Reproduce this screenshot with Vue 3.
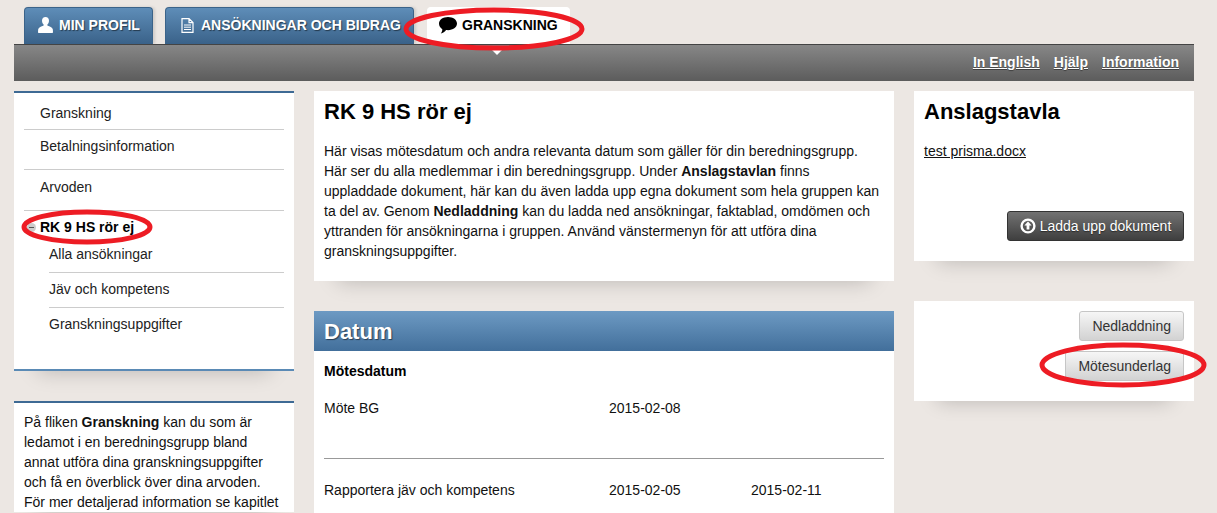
<script setup>
const menu = [
  { label: 'Granskning', cls: 'first' },
  { label: 'Betalningsinformation', cls: 'second' },
  { label: 'Arvoden', cls: 'third' },
]
const subMenu = [
  { label: 'Alla ansökningar', cls: 'sub-first' },
  { label: 'Jäv och kompetens', cls: 'sub-mid' },
  { label: 'Granskningsuppgifter', cls: 'sub-last' },
]
const topLinks = ['In English', 'Hjälp', 'Information']
</script>

<template>
  <div class="page">
    <nav class="tabs">
      <a class="tab profil">
        <svg width="15" height="16" viewBox="0 0 15 16"><path fill="#fff" d="M7.5 0C5.3 0 4 1.7 4 3.8c0 1.5.7 3 1.6 3.8.2.5.1 1-.3 1.2C3.500 9.600.6 10.200.2 12.200L0 15c0 .6.400 1 1 1h13c.6 0 1-.4 1-1l-.2-2.800c-.4-2-3.300-2.600-5.100-3.400-.4-.2-.5-.7-.3-1.200.9-.8 1.600-2.300 1.600-3.800C11 1.700 9.700 0 7.500 0z"/></svg>
        MIN PROFIL
      </a>
      <a class="tab ansokan">
        <svg width="13" height="15" viewBox="0 0 13 15"><path fill="none" stroke="#fff" stroke-width="1.200" d="M1 .6h7l4 4v9.800H1zM8 .6v4h4"/><path stroke="#fff" d="M3 7h7M3 9.200h7M3 11.500h7"/></svg>
        ANSÖKNINGAR OCH BIDRAG
      </a>
      <a class="tab active">
        <svg width="18" height="17" viewBox="0 0 18 17"><path fill="#000" d="M9 0c5 0 9 2.800 9 6.600s-4 6.600-9 6.600c-.7 0-1.300 0-1.900-.1C5.800 14.800 4 16 1.800 16.500c1-1.300 1.500-2.500 1.500-4.300C1.300 11 0 9 0 6.600 0 2.800 4 0 9 0z"/></svg>
        GRANSKNING
      </a>
    </nav>

    <header class="topbar">
      <a v-for="link in topLinks" :key="link">{{ link }}</a>
    </header>

    <main class="columns">
      <aside class="col-side">
        <section class="card menu">
          <a v-for="item in menu" :key="item.label" :class="['menu-item', item.cls]">{{ item.label }}</a>
          <div class="menu-current">
            <span class="minus"></span>
            RK 9 HS rör ej
          </div>
          <a v-for="item in subMenu" :key="item.label" :class="['sub-item', item.cls]">{{ item.label }}</a>
        </section>
        <section class="card help">
          <p>På fliken <b>Granskning</b> kan du som är ledamot i en beredningsgrupp bland annat utföra dina granskningsuppgifter och få en överblick över dina arvoden. För mer detaljerad information se kapitlet</p>
        </section>
      </aside>

      <div class="col-main">
        <section class="card intro">
          <h1>RK 9 HS rör ej</h1>
          <p>Här visas mötesdatum och andra relevanta datum som gäller för din beredningsgrupp. Här ser du alla medlemmar i din beredningsgrupp. Under <b>Anslagstavlan</b> finns uppladdade dokument, här kan du även ladda upp egna dokument som hela gruppen kan ta del av. Genom <b>Nedladdning</b> kan du ladda ned ansökningar, faktablad, omdömen och yttranden för ansökningarna i gruppen. Använd vänstermenyn för att utföra dina granskningsuppgifter.</p>
        </section>
        <section class="card dates">
          <h2>Datum</h2>
          <div class="dates-body">
            <h3>Mötesdatum</h3>
            <div class="date-row meeting">
              <span>Möte BG</span>
              <span>2015-02-08</span>
              <span></span>
            </div>
            <div class="date-row report">
              <span>Rapportera jäv och kompetens</span>
              <span>2015-02-05</span>
              <span>2015-02-11</span>
            </div>
          </div>
        </section>
      </div>

      <aside class="col-right">
        <section class="card board">
          <h1>Anslagstavla</h1>
          <a class="doc-link">test prisma.docx</a>
          <button class="btn dark">
            <svg width="16" height="16" viewBox="0 0 16 16"><circle cx="8" cy="8" r="6.400" fill="none" stroke="#fff" stroke-width="2.400"/><path fill="#fff" d="M8 3.600l3.600 4H9.400v4H6.600v-4H4.400z"/></svg>
            Ladda upp dokument
          </button>
        </section>
        <section class="card actions">
          <button class="btn light">Nedladdning</button>
          <button class="btn light">Mötesunderlag</button>
        </section>
      </aside>
    </main>

    <!-- red marks drawn on top of the screenshot -->
    <svg class="marks" width="1217" height="513" viewBox="0 0 1217 513">
      <g fill="none" stroke="#ed1c24" stroke-width="5">
        <ellipse cx="494" cy="29" rx="88" ry="19" />
        <ellipse cx="87" cy="227" rx="63" ry="15" />
        <ellipse cx="1123" cy="365" rx="81" ry="20" />
      </g>
    </svg>
  </div>
</template>

<style>
html, body {
  margin: 0;
  overflow: hidden;
  background: #ece7e3;
}
</style>

<style scoped>
.page {
  position: relative;
  width: 1217px;
  height: 513px;
  overflow: hidden;
  padding: 7px 23px 0 14px;
  box-sizing: border-box;
  background: #ece7e3;
  font-family: "Liberation Sans", Arial, sans-serif;
  font-size: 14px;
  line-height: 20px;
  color: #111;
}

.tabs {
  display: flex;
  height: 37px;
  margin-left: 10px;
}

.tab {
  display: flex;
  align-items: center;
  gap: 6px;
  height: 37px;
  box-sizing: border-box;
  padding-bottom: 2px;
  border: 1px solid #3b6389;
  border-bottom: 0;
  border-radius: 4px 4px 0 0;
  background: linear-gradient(#5e8db8, #3a6289);
  color: #fff;
  font-weight: bold;
  text-shadow: 1px 1px 1px rgba(0, 0, 0, .5);
  box-shadow: 2px 0 3px rgba(0, 0, 0, .12);
}

.tab svg {
  flex: none;
}

.profil {
  width: 129px;
  padding-left: 13px;
}

.ansokan {
  width: 249px;
  margin-left: 12px;
  padding-left: 15px;
  gap: 7px;
}

.active {
  width: 143px;
  margin-left: 13px;
  padding-left: 11px;
  gap: 5px;
  background: #fff;
  border-color: #fff;
  color: #000;
  text-shadow: none;
  box-shadow: none;
}

.topbar {
  position: relative;
  display: flex;
  justify-content: flex-end;
  align-items: center;
  gap: 14px;
  height: 37px;
  box-sizing: border-box;
  padding: 0 15px 2px 0;
  border-top: 1px solid #444;
  background: linear-gradient(#878787, #5c5c5c);
}

.topbar::before {
  content: "";
  position: absolute;
  left: 476px;
  top: 3px;
  border: 7px solid transparent;
  border-top-color: #fff;
  border-bottom: 0;
}

.topbar a {
  color: #fff;
  font-weight: bold;
  text-decoration: underline;
  text-shadow: 0 1px 1px rgba(0, 0, 0, .4);
}

.columns {
  display: flex;
  gap: 20px;
  margin-top: 10px;
}

.col-side,
.col-right {
  flex: none;
  width: 280px;
}

.col-main {
  flex: none;
  width: 580px;
}

.card {
  background: #fff;
  box-shadow: 0 24px 20px -24px rgba(0, 0, 0, .22);
}

/* left menu */
.menu {
  height: 280px;
  box-sizing: border-box;
  border-top: 2px solid #3e6a94;
  border-bottom: 2px solid #5a8ab5;
  padding: 0 10px;
  color: #222;
}

.menu-item {
  display: block;
  box-sizing: border-box;
  padding-left: 16px;
  border-bottom: 1px solid #ccc;
}

.first {
  height: 37px;
  padding-top: 10px;
}

.second {
  height: 40px;
  padding-top: 6px;
}

.third {
  height: 41px;
  padding-top: 7px;
}

.menu-current {
  position: relative;
  height: 33px;
  padding: 6px 0 0 16px;
  box-sizing: border-box;
  font-weight: bold;
  color: #000;
}

.minus {
  position: absolute;
  left: 3px;
  top: 12px;
  width: 9px;
  height: 9px;
  border-radius: 50%;
  background: #ccc;
}

.minus::after {
  content: "";
  position: absolute;
  left: 2px;
  right: 2px;
  top: 4px;
  height: 1px;
  background: #555;
}

.sub-item {
  display: block;
  box-sizing: border-box;
  margin-left: 25px;
  border-bottom: 1px solid #ccc;
}

.sub-first {
  height: 29px;
}

.sub-mid {
  height: 35px;
  padding-top: 6px;
}

.sub-last {
  padding-top: 6px;
  border-bottom: 0;
}

.help {
  margin-top: 30px;
  border-top: 2px solid #3e6a94;
  padding: 9px 10px 0;
}

.help p {
  margin: 0;
}

/* middle */
.intro {
  height: 190px;
  box-sizing: border-box;
  padding: 8px 10px 0;
}

h1 {
  margin: 0;
  font-size: 22px;
  line-height: 25px;
  font-weight: bold;
  color: #000;
}

.intro p {
  margin: 17px 0 0;
  line-height: 20px;
}

.dates {
  margin-top: 30px;
  height: 220px;
}

h2 {
  margin: 0;
  height: 40px;
  padding-left: 10px;
  background: linear-gradient(#6d9ac3, #426f9b);
  color: #fff;
  font-size: 22px;
  line-height: 41px;
  text-shadow: 1px 1px 1px rgba(0, 0, 0, .5);
}

.dates-body {
  padding: 0 10px;
}

h3 {
  margin: 0;
  padding-top: 10px;
  font-size: 14px;
  line-height: 20px;
  color: #000;
}

.date-row {
  display: grid;
  grid-template-columns: 285px 142px 1fr;
}

.meeting {
  height: 78px;
  padding-top: 17px;
  box-sizing: border-box;
  border-bottom: 1px solid #999;
}

.report {
  padding-top: 21px;
}

/* right */
.board {
  position: relative;
  height: 170px;
  box-sizing: border-box;
  padding: 8px 10px 0;
}

.doc-link {
  display: block;
  margin-top: 17px;
  text-decoration: underline;
}

.btn {
  display: flex;
  align-items: center;
  justify-content: center;
  height: 30px;
  box-sizing: border-box;
  border-radius: 3px;
  font: 14px/20px "Liberation Sans", Arial, sans-serif;
}

.dark {
  position: absolute;
  right: 10px;
  top: 120px;
  width: 177px;
  gap: 4px;
  padding: 0;
  border: 1px solid #333;
  background: linear-gradient(#727272, #3f3f3f);
  color: #fff;
  text-shadow: 0 1px 1px rgba(0, 0, 0, .5);
}

.actions {
  margin-top: 40px;
  height: 100px;
  box-sizing: border-box;
  padding: 10px;
  display: flex;
  flex-direction: column;
  align-items: flex-end;
  gap: 10px;
}

.light {
  padding: 0 12px;
  border: 1px solid #c6c6c6;
  background: linear-gradient(#f6f6f6, #d2d2d2);
  color: #333;
}

.marks {
  position: absolute;
  left: 0;
  top: 0;
  pointer-events: none;
}
</style>
